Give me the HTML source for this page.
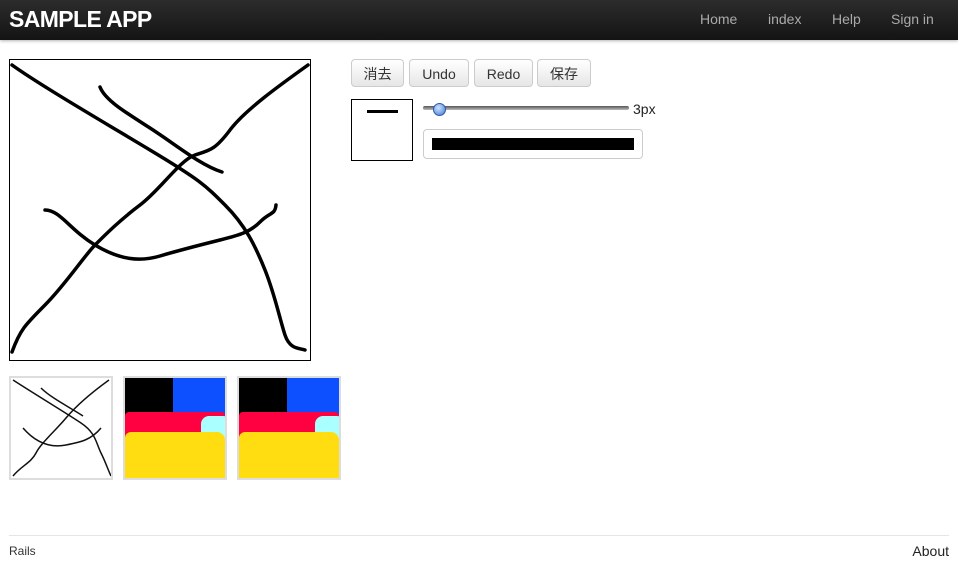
<!DOCTYPE html>
<html><head><meta charset="utf-8"><style>
body{margin:0;width:958px;height:587px;background:#fff;font-family:"Liberation Sans","Noto Sans CJK JP",sans-serif;position:relative;overflow:hidden}
.nav{position:absolute;left:0;top:0;width:958px;height:40px;background:linear-gradient(#2c2c2c,#141414);box-shadow:0 1px 3px rgba(0,0,0,.3)}
.brand{position:absolute;left:9px;top:6px;color:#fff;font-weight:bold;font-size:23px;letter-spacing:-0.6px}
.nav a{position:absolute;top:11px;color:#aaa;font-size:14px;text-decoration:none}
.btn{position:absolute;top:59px;height:28px;border:1px solid #ccc;border-radius:4px;background:linear-gradient(#fff,#e6e6e6);font-size:14px;color:#333;text-align:center;line-height:28px;box-sizing:border-box}
.th{position:absolute;top:376px;width:104px;height:104px;box-sizing:border-box;border:2px solid #ddd;overflow:hidden}
</style></head><body>
<div class="nav"><div class="brand">SAMPLE APP</div>
<a style="left:700px">Home</a><a style="left:768px">index</a><a style="left:832px">Help</a><a style="left:891px">Sign in</a></div>
<div style="position:absolute;left:9px;top:59px;width:302px;height:302px;border:1px solid #000;box-sizing:border-box"></div>
<svg style="position:absolute;left:0;top:0" width="958" height="587" fill="none" stroke="#000" stroke-width="3.5" stroke-linecap="round" stroke-linejoin="round">
<path d="M12,65 C40,85 100,120 150,150 S205,185 225,205 S255,245 265,270 S280,320 285,335 S300,348 305,350"/>
<path d="M100,87 C105,100 125,112 150,128 S200,165 222,172"/>
<path d="M308,65 C280,85 245,110 230,130 S210,150 195,155 S160,190 140,205 S105,235 95,245 S65,285 45,305 S20,330 12,352"/>
<path d="M45,210 C60,210 70,230 95,245 S140,262 160,256 S200,245 220,240 S250,232 260,222 S275,215 276,205"/>
</svg>
<div class="btn" style="left:351px;width:53px">消去</div>
<div class="btn" style="left:409px;width:60px">Undo</div>
<div class="btn" style="left:474px;width:59px">Redo</div>
<div class="btn" style="left:537px;width:54px">保存</div>
<div style="position:absolute;left:351px;top:99px;width:62px;height:62px;border:1px solid #000;box-sizing:border-box"><div style="position:absolute;left:15px;top:10px;width:31px;height:3px;background:#000"></div></div>
<div style="position:absolute;left:423px;top:106px;width:206px;height:4px;background:linear-gradient(#555,#bbb);border-radius:2px"></div>
<div style="position:absolute;left:433px;top:103px;width:11px;height:11px;border-radius:50%;background:radial-gradient(circle at 40% 35%,#cfe3ff,#3a7bd5);border:1px solid #35a"></div>
<div style="position:absolute;left:633px;top:101px;font-size:14px;color:#222">3px</div>
<div style="position:absolute;left:423px;top:129px;width:220px;height:30px;border:1px solid #ccc;border-radius:4px;box-sizing:border-box"><div style="position:absolute;left:8px;top:8px;width:202px;height:12px;background:#000"></div></div>
<div class="th" style="left:9px"><svg width="100" height="100" fill="none" stroke="#111" stroke-width="1.5"><path d="M2,2 C30,20 55,35 70,45 S85,65 90,75 S97,92 100,98"/><path d="M30,10 C40,20 60,30 72,38"/><path d="M98,2 C80,15 65,28 55,40 S30,65 25,75 S10,88 2,98"/><path d="M12,50 C25,65 40,70 55,67 S80,62 90,50"/></svg></div>
<div class="th" style="left:123px"><div style="position:absolute;left:0;top:0;width:50px;height:38px;background:#000"></div><div style="position:absolute;left:48px;top:0;width:60px;height:40px;background:#0d50ff;border-radius:0 0 0 6px"></div><div style="position:absolute;left:0;top:34px;width:100px;height:30px;background:#ff0040;border-radius:4px 4px 0 0"></div><div style="position:absolute;left:76px;top:38px;width:30px;height:30px;background:#aaffff;border-radius:8px"></div><div style="position:absolute;left:0;top:54px;width:100px;height:50px;background:#ffdd11;border-radius:6px 8px 0 0"></div></div>
<div class="th" style="left:237px"><div style="position:absolute;left:0;top:0;width:50px;height:38px;background:#000"></div><div style="position:absolute;left:48px;top:0;width:60px;height:40px;background:#0d50ff;border-radius:0 0 0 6px"></div><div style="position:absolute;left:0;top:34px;width:100px;height:30px;background:#ff0040;border-radius:4px 4px 0 0"></div><div style="position:absolute;left:76px;top:38px;width:30px;height:30px;background:#aaffff;border-radius:8px"></div><div style="position:absolute;left:0;top:54px;width:100px;height:50px;background:#ffdd11;border-radius:6px 8px 0 0"></div></div>
<div style="position:absolute;left:9px;top:535px;width:940px;border-top:1px solid #e5e5e5"></div>
<div style="position:absolute;left:9px;top:544px;font-size:12px;color:#333">Rails</div>
<div style="position:absolute;right:9px;top:543px;font-size:14px;color:#222">About</div>
</body></html>
